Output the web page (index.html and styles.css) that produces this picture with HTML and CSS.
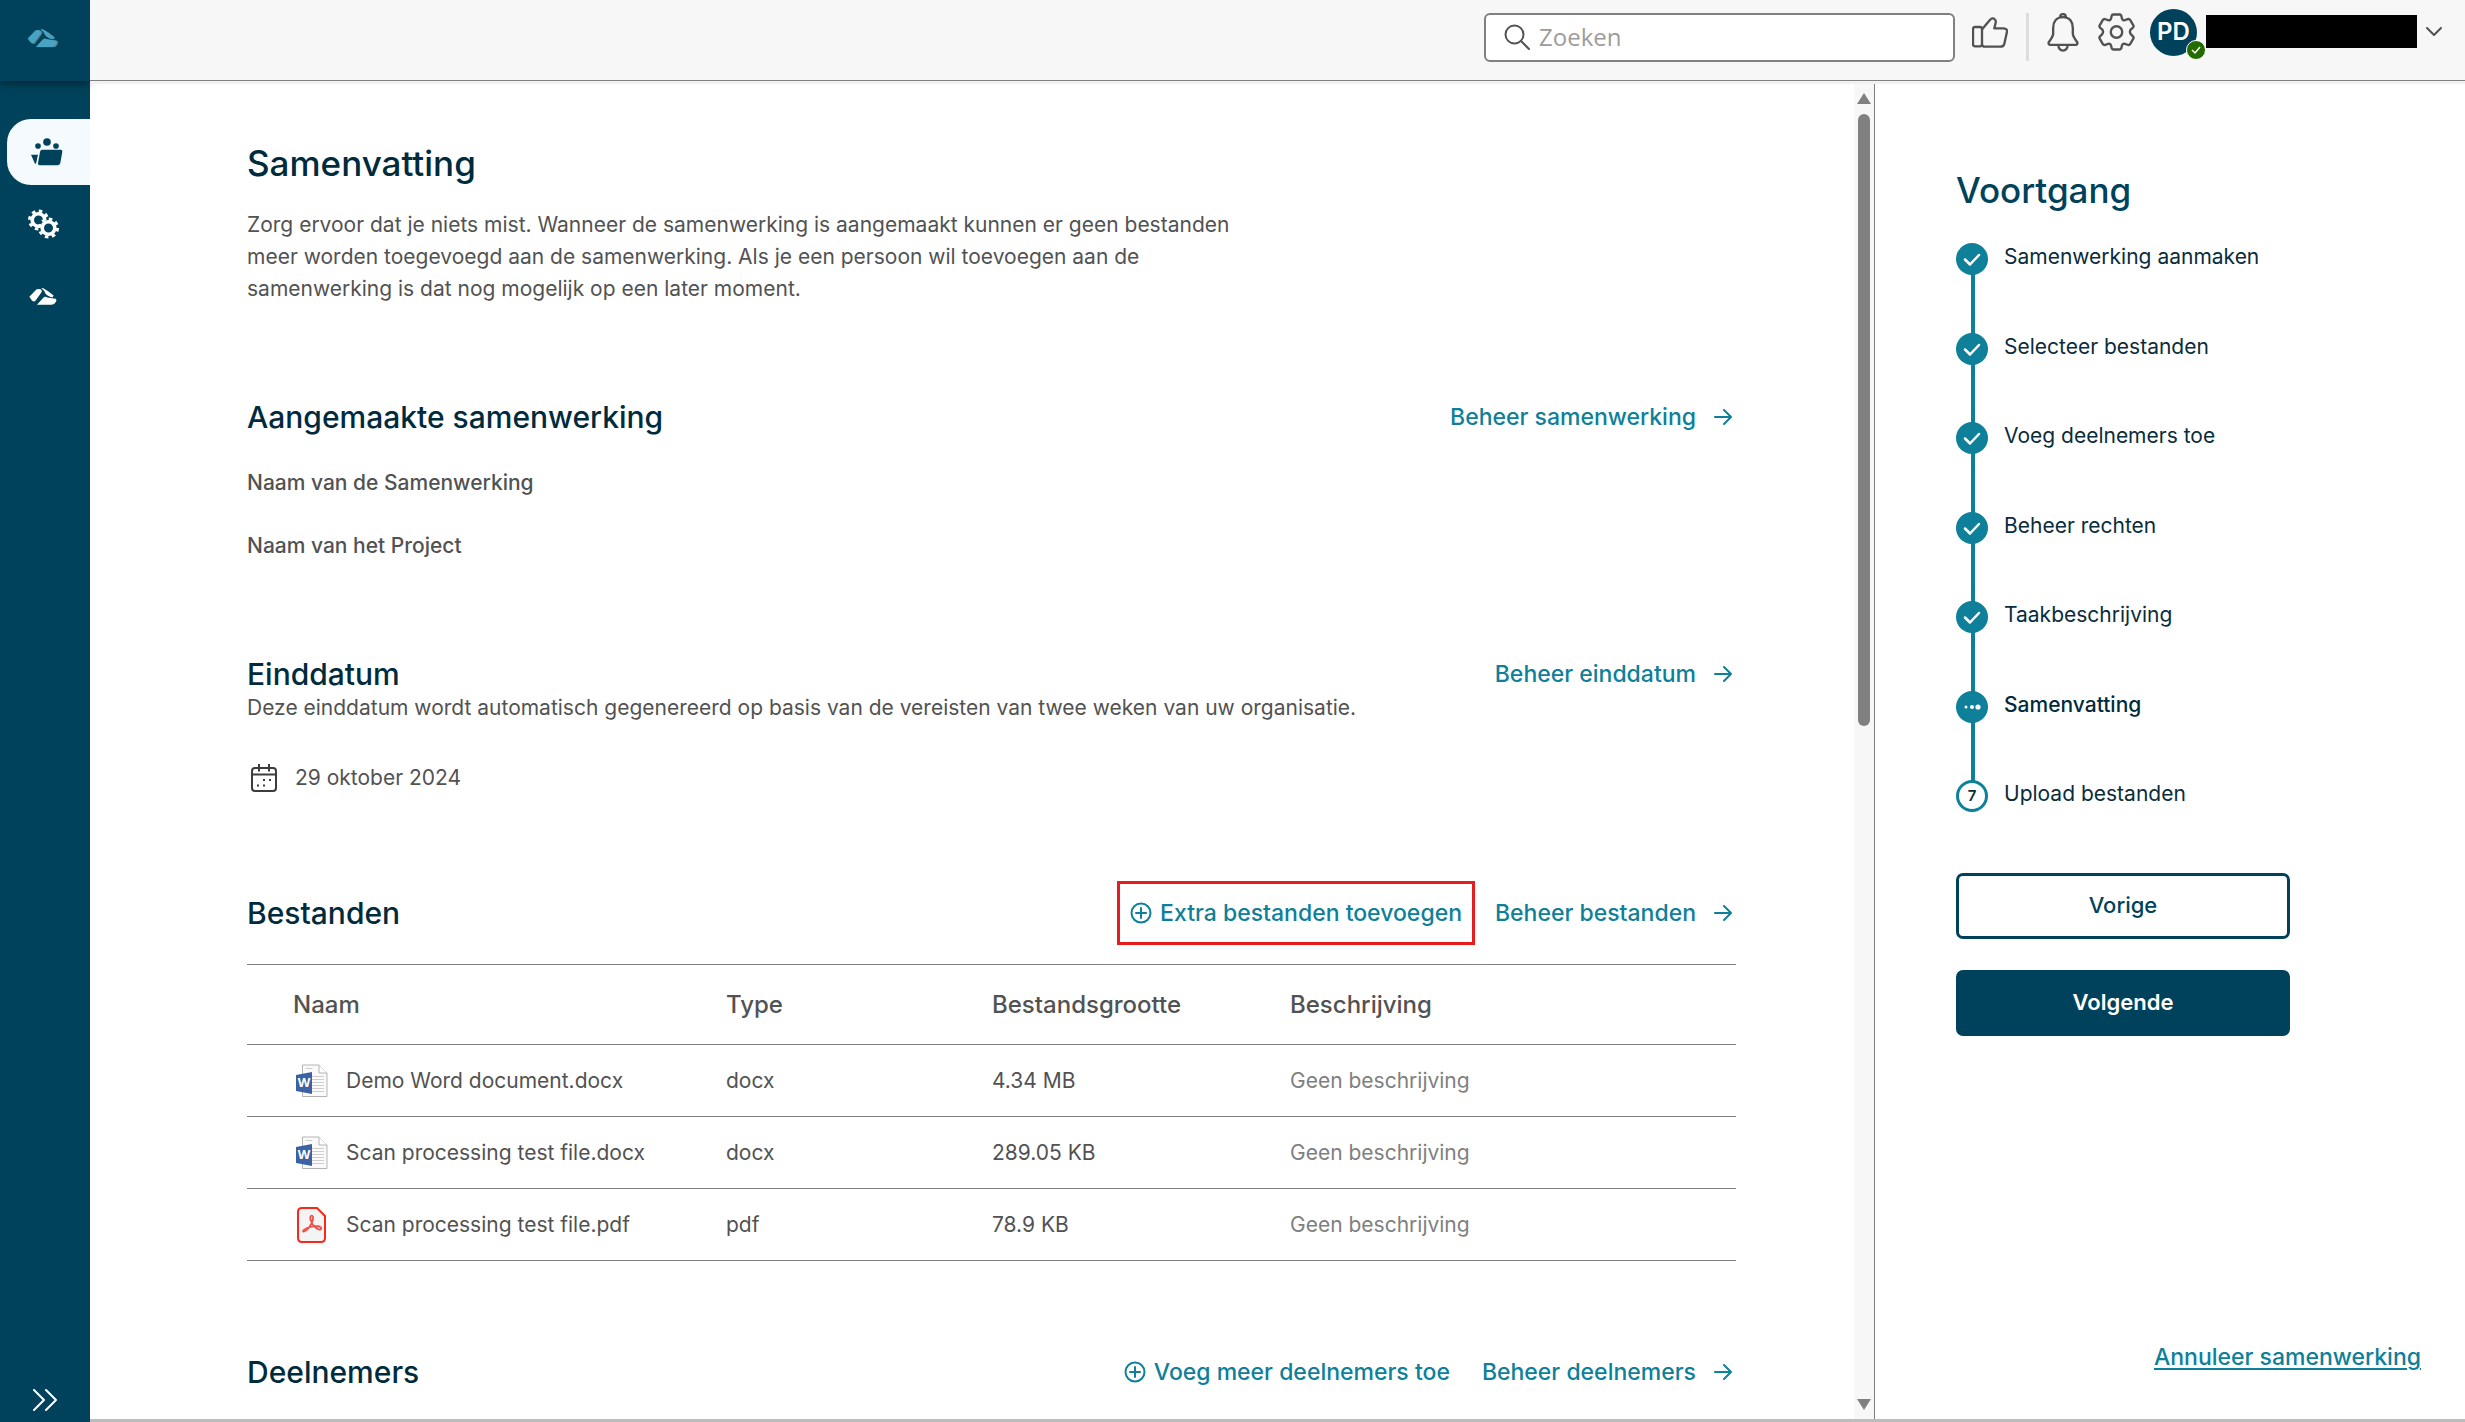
FILE: index.html
```html
<!DOCTYPE html>
<html lang="nl">
<head>
<meta charset="utf-8">
<title>Samenvatting</title>
<link rel="stylesheet" href="styles.css">
</head>
<body>
<svg class="defs" width="0" height="0" aria-hidden="true">
  <symbol id="cloud" viewBox="0 0 92 56">
    <path d="M1 29 24 5Q28 2 38 4 45 8 40 16L21 42Q16 48 9 40Z"/>
    <path d="M40 1H47Q64 10 81 25L77 31Q60 26 54 18 50 8 40 1Z"/>
    <path d="M26 55 47 32Q53 27 60 31L87 35Q93 39 88 46 84 55 74 55Z"/>
  </symbol>
  <symbol id="arrow" viewBox="0 0 18 18">
    <path d="M1 9h16M10 2l7 7-7 7" fill="none" stroke="currentColor" stroke-width="2" stroke-linecap="round" stroke-linejoin="round"/>
  </symbol>
  <symbol id="plus" viewBox="0 0 22 22">
    <path d="M11 6v10M6 11h10" fill="none" stroke="currentColor" stroke-width="2" stroke-linecap="round"/>
    <circle cx="11" cy="11" r="9.500" fill="none" stroke="currentColor" stroke-width="2"/>
  </symbol>
  <symbol id="check" viewBox="0 0 32 32">
    <path d="M9 16.500l5 5L23 12" fill="none" stroke="#fff" stroke-width="2.500" stroke-linecap="round" stroke-linejoin="round"/>
  </symbol>
  <symbol id="word" viewBox="0 0 32 34">
    <path d="M6.500 1H23l8 8v23.500H6.500z" fill="#fafafa" stroke="#b4b4b4"/>
    <path d="M23 1v8h8" fill="#fff" stroke="#b4b4b4"/>
    <path d="M9.500 4.500h7M16 12.500h12M16 15.500h12M16 18.500h12M16 21.500h12M16 24.500h12M16 27.500h12" stroke="#cdcdcd"/>
    <path d="M0 11l16-3v22L0 27z" fill="#3a62a5"/>
  </symbol>
</svg>
<div class="app">
  <aside class="sidebar">
    <a class="logo" href="#" aria-label="Start">
      <svg width="32" height="19" viewBox="0 0 96 58"><use href="#cloud" x="4" y="1" width="92" height="56" fill="#567987"/><use href="#cloud" width="92" height="56" fill="#48a2c2"/></svg>
    </a>
    <nav class="nav">
      <a class="nav-item active" href="#" aria-label="Samenwerkingen">
        <svg width="32" height="28" viewBox="0 0 96 84" fill="#00425b"><circle cx="48" cy="12" r="11.500"/><circle cx="21" cy="24" r="8.500"/><circle cx="75" cy="24" r="8.500"/><path d="M34 35H89Q95 35 94 41L88 75Q86 82 79 82H26Q20 82 21 76L27 42Q28 35 34 35ZM0 50H21L15 77H12Z"/></svg>
      </a>
      <a class="nav-item" href="#" aria-label="Instellingen">
        <svg width="32" height="32" viewBox="0 0 32 32" fill="none">
          <g stroke="#fff"><circle cx="11.500" cy="12" r="6.300" stroke-width="3.600"/><circle cx="11.500" cy="12" r="9" stroke-width="3" stroke-dasharray="3.500 3.570"/></g>
          <circle cx="21.500" cy="20" r="8" fill="#00425b" stroke="#00425b"/>
          <g stroke="#fff"><circle cx="21.500" cy="20" r="6.300" stroke-width="3.600"/><circle cx="21.500" cy="20" r="9" stroke-width="3" stroke-dasharray="3.500 3.570"/></g>
        </svg>
      </a>
      <a class="nav-item" href="#" aria-label="Platform"><svg width="28" height="17" fill="#fff"><use href="#cloud"/></svg></a>
    </nav>
    <button class="expand" aria-label="Menu uitklappen">
      <svg width="26" height="22" viewBox="0 0 26 22" fill="none" stroke="#fff" stroke-width="2" stroke-linecap="round" stroke-linejoin="round"><path d="M2 1l10 10L2 21M14 1l10 10-10 10"/></svg>
    </button>
  </aside>

  <header class="topbar">
    <label class="search">
      <svg width="27" height="26" viewBox="0 0 27 26" fill="none" stroke="#525252" stroke-width="2" stroke-linecap="round"><circle cx="10.500" cy="10.500" r="9"/><path d="M17 17l8 8"/></svg>
      <input type="search" placeholder="Zoeken" aria-label="Zoeken">
    </label>
    <button class="icon-btn thumbs" aria-label="Feedback">
      <svg width="36" height="31" viewBox="66 51 108 93" fill="none" stroke="#525252" stroke-width="7" stroke-linejoin="round"><rect x="69" y="81" width="27" height="58" rx="6"/><path d="M97 87 119 61Q125 53 132 56 139 60 137 68L133 85H161Q172 86 171 95L163 131Q161 140 151 140H105Q97 140 96 133"/></svg>
    </button>
    <span class="divider"></span>
    <button class="icon-btn bell" aria-label="Meldingen">
      <svg width="32" height="39" viewBox="-1 0 94 115" fill="none" stroke="#525252" stroke-width="7" stroke-linejoin="round"><path d="M46 12C26 12 17 26 17 44V62Q16 70 4 86 2 93 9 94H83Q90 93 88 86 76 70 75 62V44C75 26 66 12 46 12ZM37 12Q38 3 46 3T55 12M32 95Q34 111 46 111T60 95"/></svg>
    </button>
    <button class="icon-btn" aria-label="Voorkeuren">
      <svg width="37" height="38" viewBox="0 0 110 112" fill="none" stroke="#525252" stroke-width="7" stroke-linejoin="round"><path d="M45 4H65Q68 4 69 7L71 15Q73 23 80 21L88 18Q93 16 96 21L105 36Q107 40 104 43L98 48Q92 55 98 63L104 69Q107 72 105 76L96 91Q93 96 88 94L80 91Q73 89 71 97L69 105Q68 108 65 108H45Q42 108 41 105L39 97Q37 89 30 91L22 94Q17 96 14 91L5 76Q3 72 6 69L12 63Q18 55 12 48L6 43Q3 40 5 36L14 21Q17 16 22 18L30 21Q37 23 39 15L41 7Q42 4 45 4Z"/><circle cx="55" cy="56" r="17"/></svg>
    </button>
    <button class="profile" aria-label="Profiel">
      <span class="avatar">PD<span class="status"><svg width="16" height="16" viewBox="0 0 16 16" fill="none" stroke="#fff" stroke-width="1.500"><path d="M4 8l3 3 5-6"/></svg></span></span>
      <span class="redacted"></span>
      <svg width="16" height="10" viewBox="0 0 16 10" fill="none" stroke="#525252" stroke-width="2" stroke-linecap="round" stroke-linejoin="round"><path d="M1 1l7 7 7-7"/></svg>
    </button>
  </header>

  <div class="body">
    <main class="content">
      <h1>Samenvatting</h1>
      <p class="intro">Zorg ervoor dat je niets mist. Wanneer de samenwerking is aangemaakt kunnen er geen bestanden meer worden toegevoegd aan de samenwerking. Als je een persoon wil toevoegen aan de samenwerking is dat nog mogelijk op een later moment.</p>

      <section class="block">
        <div class="head"><h2>Aangemaakte samenwerking</h2><a class="action manage" href="#">Beheer samenwerking<svg width="18" height="18"><use href="#arrow"/></svg></a></div>
        <div class="fields"><h3>Naam van de Samenwerking</h3><h3>Naam van het Project</h3></div>
      </section>

      <section class="block">
        <div class="head"><h2>Einddatum</h2><a class="action manage" href="#">Beheer einddatum<svg width="18" height="18"><use href="#arrow"/></svg></a></div>
        <p>Deze einddatum wordt automatisch gegenereerd op basis van de vereisten van twee weken van uw organisatie.</p>
        <p class="date">
          <svg width="26" height="28" viewBox="0 0 26 28" fill="none" stroke="#3c3c3c" stroke-width="2"><rect x="1" y="4" width="24" height="23" rx="3"/><path d="M1 10.500h24M8 0v7.500M18 0v7.500"/><path d="M6 21.500h2M12 21.500h2M12 16h2M18 16h2" stroke-width="2.200"/></svg>
          29 oktober 2024
        </p>
      </section>

      <section class="block tall">
        <div class="head"><h2>Bestanden</h2><div class="actions">
          <a class="action add highlight" href="#"><svg width="22" height="22"><use href="#plus"/></svg>Extra bestanden toevoegen</a>
          <a class="action manage" href="#">Beheer bestanden<svg width="18" height="18"><use href="#arrow"/></svg></a>
        </div></div>
        <table class="files">
          <thead><tr><th class="col-name">Naam</th><th class="col-type">Type</th><th class="col-size">Bestandsgrootte</th><th>Beschrijving</th></tr></thead>
          <tbody>
            <tr><td><span class="file"><svg width="32" height="34"><use href="#word"/><text x="8" y="23" class="word-letter">W</text></svg>Demo Word document.docx</span></td><td>docx</td><td>4.34 MB</td><td class="muted">Geen beschrijving</td></tr>
            <tr><td><span class="file"><svg width="32" height="34"><use href="#word"/><text x="8" y="23" class="word-letter">W</text></svg>Scan processing test file.docx</span></td><td>docx</td><td>289.05 KB</td><td class="muted">Geen beschrijving</td></tr>
            <tr><td><span class="file"><svg width="32" height="36" viewBox="0 0 32 36"><path d="M6 1H21L29 9V31Q29 35 25 35H6Q2 35 2 31V5Q2 1 6 1Z" fill="#f4f4f4" stroke="#f5291c" stroke-width="2"/><path d="M8 24C11 25 18 14 17 10 16 7 13 9 15 14 17 20 23 24 25 22 27 19 18 18 11 21 6 23 6 26 9 24Z" fill="none" stroke="#f0504a" stroke-width="1.800"/></svg>Scan processing test file.pdf</span></td><td>pdf</td><td>78.9 KB</td><td class="muted">Geen beschrijving</td></tr>
          </tbody>
        </table>
      </section>

      <section class="block tall">
        <div class="head"><h2>Deelnemers</h2><div class="actions">
          <a class="action add" href="#"><svg width="22" height="22"><use href="#plus"/></svg>Voeg meer deelnemers toe</a>
          <a class="action manage" href="#">Beheer deelnemers<svg width="18" height="18"><use href="#arrow"/></svg></a>
        </div></div>
      </section>
    </main>

    <div class="scrollbar" aria-hidden="true">
      <svg width="14" height="11" viewBox="0 0 14 11" fill="#808080"><path d="M7 0l7 11H0z"/></svg>
      <div class="track"><div class="thumb"></div></div>
      <svg width="14" height="11" viewBox="0 0 14 11" fill="#808080"><path d="M7 11L0 0h14z"/></svg>
    </div>

    <aside class="progress">
      <h2>Voortgang</h2>
      <ol class="steps">
        <li><span class="dot"><svg width="32" height="32"><use href="#check"/></svg></span>Samenwerking aanmaken</li>
        <li><span class="dot"><svg width="32" height="32"><use href="#check"/></svg></span>Selecteer bestanden</li>
        <li><span class="dot"><svg width="32" height="32"><use href="#check"/></svg></span>Voeg deelnemers toe</li>
        <li><span class="dot"><svg width="32" height="32"><use href="#check"/></svg></span>Beheer rechten</li>
        <li><span class="dot"><svg width="32" height="32"><use href="#check"/></svg></span>Taakbeschrijving</li>
        <li class="current" aria-current="step"><span class="dot"><svg width="32" height="32" viewBox="0 0 32 32" fill="#fff"><circle cx="10" cy="16" r="1.500"/><circle cx="16" cy="16" r="2"/><circle cx="22" cy="16" r="2.600"/></svg></span>Samenvatting</li>
        <li><span class="dot open">7</span>Upload bestanden</li>
      </ol>
      <div class="buttons">
        <button class="btn">Vorige</button>
        <button class="btn primary">Volgende</button>
      </div>
      <a class="cancel" href="#">Annuleer samenwerking</a>
    </aside>
  </div>
</div>
</body>
</html>
```
FILE: styles.css
```css
* { box-sizing: border-box; }

body {
  margin: 0;
  font: 400 21px/32px Inter, "Liberation Sans", sans-serif;
  color: #525252;
  background: #fff;
}

h1, h2, h3, p, ol { margin: 0; padding: 0; font-weight: 500; }
p { font-weight: 400; }
svg { display: block; flex: none; }
a { color: #0e8099; text-decoration: none; }
button { font: inherit; color: inherit; background: none; border: 0; padding: 0; }
.defs { position: absolute; }

.app {
  display: grid;
  grid-template: 81px 1fr / 90px 1fr;
  height: 100vh;
  overflow: hidden;
}

/* Sidebar */
.sidebar {
  grid-row: 1 / 3;
  display: flex;
  flex-direction: column;
  background: #00425b;
}
.logo {
  display: flex;
  align-items: center;
  justify-content: center;
  height: 81px;
  padding: 0 4px 4px 0;
  box-shadow: 0 2px 8px rgba(0, 0, 0, .5);
}
.nav {
  display: flex;
  flex-direction: column;
  gap: 6px;
  padding: 38px 0 0 7px;
}
.nav-item {
  display: flex;
  align-items: center;
  justify-content: center;
  height: 66px;
  padding-right: 12px;
  border-radius: 24px 0 0 24px;
}
.nav-item.active { background: #f5faff; padding-right: 4px; }
.expand {
  display: flex;
  justify-content: center;
  margin-top: auto;
  padding-bottom: 11px;
}

/* Top bar */
.topbar {
  display: flex;
  align-items: flex-start;
  justify-content: flex-end;
  padding: 13px 23px 0;
  background: #f7f7f7;
  border-bottom: 1px solid #808080;
}
.search {
  display: flex;
  align-items: center;
  gap: 8px;
  flex: 0 1 471px;
  height: 49px;
  padding: 0 18px 2px;
  margin-right: 17px;
  background: #fff;
  border: 2px solid #808080;
  border-radius: 6px;
}
.search input {
  flex: 1;
  min-width: 0;
  padding: 0;
  border: 0;
  outline: 0;
  font: 24px/32px "Open Sans", sans-serif;
}
.search input::placeholder { color: #9c9c9c; }
.icon-btn { display: flex; align-items: center; height: 38px; }
.divider { width: 3px; height: 48px; margin: 0 18px; background: #ddd; }
.bell { margin-right: 19px; }
.profile { display: flex; align-items: center; height: 38px; margin-left: 15px; gap: 9px; }
.avatar {
  position: relative;
  display: grid;
  place-items: center;
  width: 47px;
  height: 47px;
  border-radius: 50%;
  background: #00425b;
  color: #fff;
  font-size: 24px;
  font-weight: 600;
}
.status {
  position: absolute;
  right: -9px;
  bottom: -4px;
  padding: 1px;
  border: 1px solid #fff;
  border-radius: 50%;
  background: #246b00;
}
.redacted { width: 211px; height: 33px; margin-bottom: 2px; background: #000; }

/* Main area */
.body {
  display: grid;
  grid-template-columns: 1fr 21px 590px;
  min-height: 0;
  border-top: 3px solid #f2f2f2;
  border-bottom: 3px solid #bdbdbd;
}
.content {
  padding: 57px 118px 0 157px;
  overflow: hidden;
}
h1 { font-size: 35px; line-height: 44px; color: #002b3d; }
h2 { font-size: 30px; line-height: 36px; color: #002b3d; }
h3 { font-size: 21px; line-height: 32px; }
.intro { max-width: 1020px; margin-top: 24px; }
.block { margin-top: 94px; }
.block.tall { margin-top: 79px; }
.head { display: flex; align-items: center; justify-content: space-between; }
.tall .head { min-height: 64px; }
.fields { display: grid; gap: 31px; margin-top: 32px; }
.date {
  display: flex;
  align-items: center;
  gap: 18px;
  margin-top: 38px;
  padding: 0 0 8px 4px;
}

.actions { display: flex; align-items: center; gap: 20px; }
.action {
  display: flex;
  align-items: center;
  font-size: 23px;
  font-weight: 500;
}
.manage { gap: 18px; padding-right: 4px; }
.add { gap: 8px; padding: 0 12px; }
.highlight { height: 64px; padding: 0 10px; border: 3px solid #e71d1d; }

.files {
  width: 100%;
  margin-top: 19px;
  border-collapse: collapse;
  text-align: left;
}
.files tr { border-bottom: 1px solid #808080; }
.files thead tr { border-top: 1px solid #808080; }
.files th { height: 80px; padding: 0; font-size: 24px; font-weight: 500; }
.files td { height: 72px; padding: 0; }
.files .col-name { width: 479px; padding-left: 46px; }
.files .col-type { width: 266px; }
.files .col-size { width: 298px; }
.file { display: flex; align-items: center; gap: 18px; padding-left: 49px; }
.muted { color: #808080; }
.word-letter { font: 700 13px "Open Sans", sans-serif; fill: #fff; text-anchor: middle; }

.scrollbar {
  display: flex;
  flex-direction: column;
  align-items: center;
  gap: 10px;
  padding: 9px 0;
  background: #f7f7f7;
  border-right: 1px solid #808080;
}
.track { flex: 1; }
.thumb { width: 12px; height: 48%; border-radius: 6px; background: #808080; }

/* Progress panel */
.progress {
  display: flex;
  flex-direction: column;
  padding: 84px 44px 46px 81px;
}
.progress h2 { font-size: 35px; line-height: 44px; color: #00425b; }
.steps {
  display: grid;
  grid-auto-rows: 1fr;
  height: 627px;
  margin-top: 31px;
  list-style: none;
  color: #0a2c3c;
}
.steps li {
  position: relative;
  display: flex;
  align-items: flex-start;
  gap: 16px;
  line-height: 28px;
  font-weight: 400;
}
.steps li:not(:last-child)::before {
  content: "";
  position: absolute;
  left: 15px;
  top: 16px;
  width: 4px;
  height: 100%;
  background: #0e8099;
}
.steps .current { font-weight: 500; color: #002b3d; }
.dot {
  position: relative;
  width: 32px;
  height: 32px;
  border-radius: 50%;
  background: #0e8099;
}
.dot.open {
  border: 3px solid #0e8099;
  background: #fff;
  font-size: 15px;
  font-weight: 600;
  line-height: 26px;
  text-align: center;
}
.buttons { display: grid; gap: 31px; width: 334px; margin-top: 3px; }
.btn {
  height: 66px;
  padding-bottom: 2px;
  border: 3px solid #00425b;
  border-radius: 7px;
  color: #00425b;
  font-size: 22px;
  font-weight: 500;
}
.primary { background: #00425b; color: #fff; font-weight: 600; }
.cancel {
  align-self: flex-end;
  margin-top: auto;
  font-size: 23px;
  font-weight: 500;
  text-decoration: underline;
  text-decoration-thickness: 2px;
  text-underline-offset: 3px;
}
```
